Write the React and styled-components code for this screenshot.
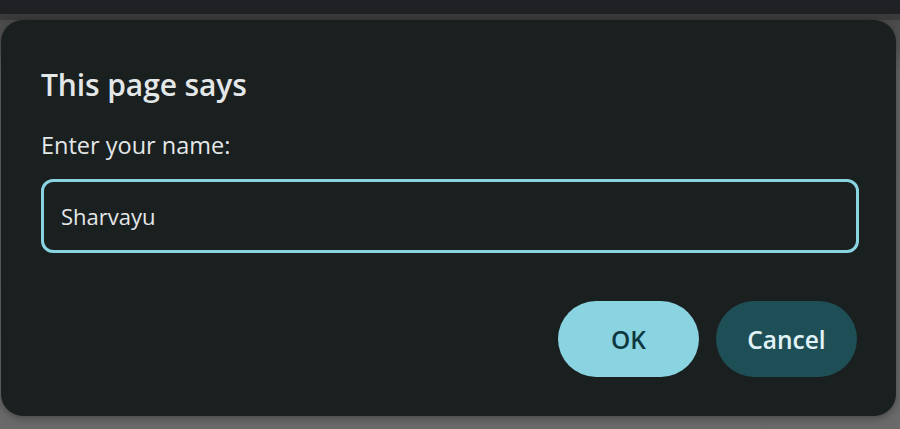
import React from "react";
import styled, { createGlobalStyle } from "styled-components";

const Global = createGlobalStyle`
  html, body { margin: 0; padding: 0; }
  body { width: 900px; height: 429px; overflow: hidden; background: #666; font-family: "Open Sans", "Noto Sans", sans-serif; }
`;

const Page = styled.div`
  width: 900px;
  height: 429px;
  display: flex;
  flex-direction: column;
  background: #666;
`;

const TopBar = styled.div`
  height: 14px;
  background: #202125;
  flex: none;
`;

const Stage = styled.div`
  flex: 1;
  background: linear-gradient(#3b3b3b 0 6px, #4a4a4a 6px, #666 60px, #6a6a6a);
  padding: 6px 4px 0 1px;
`;

const Dialog = styled.div`
  height: 396px;
  box-sizing: border-box;
  background: #1a1f20;
  border-radius: 22px;
  box-shadow: 0 2px 8px rgba(0, 0, 0, 0.35);
  padding: 45px 37px 0 40px;
  display: flex;
  flex-direction: column;
  color: #e4e7e8;
`;

const Title = styled.h1`
  margin: 0;
  font-size: 30px;
  font-weight: 600;
  line-height: 40px;
  letter-spacing: -0.1px;
`;

const Label = styled.label`
  margin-top: 24px;
  font-size: 23.5px;
  line-height: 32px;
  font-weight: 400;
`;

const Input = styled.input`
  margin-top: 18px;
  height: 74px;
  box-sizing: border-box;
  border: 3px solid #8ad4e2;
  border-radius: 12px;
  background: transparent;
  color: #e4e7e8;
  font-family: "Open Sans", "Noto Sans", sans-serif;
  font-size: 22px;
  padding: 0 17px;
  outline: none;
`;

const Actions = styled.div`
  margin-top: 48px;
  display: flex;
  justify-content: flex-end;
  gap: 17px;
  padding-right: 2px;
`;

const Button = styled.button`
  width: 141px;
  height: 76px;
  border: none;
  border-radius: 38px;
  font-family: "Open Sans", "Noto Sans", sans-serif;
  font-size: 24.5px;
  font-weight: 600;
  background: ${(p) => (p.$primary ? "#8ad3e1" : "#1f4f56")};
  color: ${(p) => (p.$primary ? "#0e3840" : "#e1f3f6")};
  cursor: pointer;
`;

export default function App() {
  return (
    <>
      <Global />
      <Page>
        <TopBar />
        <Stage>
          <Dialog>
            <Title>This page says</Title>
            <Label htmlFor="name">Enter your name:</Label>
            <Input id="name" defaultValue="Sharvayu" />
            <Actions>
              <Button $primary>OK</Button>
              <Button>Cancel</Button>
            </Actions>
          </Dialog>
        </Stage>
      </Page>
    </>
  );
}
